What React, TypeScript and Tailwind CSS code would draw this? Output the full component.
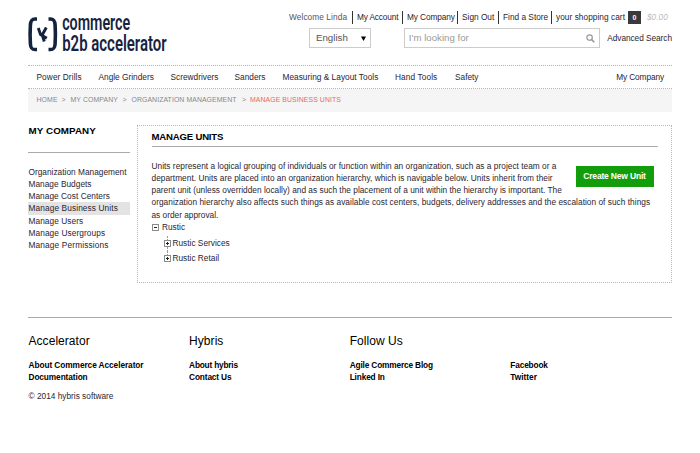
import React from 'react';

const nav: [string, string][] = [
  ['Power Drills', 'w-[62px] tracking-[0.080px]'],
  ['Angle Grinders', 'w-[72px]'],
  ['Screwdrivers', 'w-[64px]'],
  ['Sanders', 'w-[48px]'],
  ['Measuring & Layout Tools', 'w-[112.500px] tracking-[0.020px]'],
  ['Hand Tools', 'w-[60px] tracking-[0.100px]'],
  ['Safety', 'flex-1'],
];

const side: [string, string][] = [
  ['Organization Management', 'tracking-[0.010px]'],
  ['Manage Budgets', 'tracking-[0.020px]'],
  ['Manage Cost Centers', 'tracking-[0.040px]'],
  ['Manage Business Units', 'tracking-[0.110px]'],
  ['Manage Users', 'tracking-[0.060px]'],
  ['Manage Usergroups', 'tracking-[0.090px]'],
  ['Manage Permissions', 'tracking-[0.150px]'],
];

const intro: [string, string][] = [
  ['Units represent a logical grouping of individuals or function within an organization, such as a project team or a', 'tracking-[0.025px]'],
  ['department. Units are placed into an organization hierarchy, which is navigable below. Units inherit from their', 'tracking-[0.025px]'],
  ['parent unit (unless overridden locally) and as such the placement of a unit within the hierarchy is important. The', 'tracking-[0.012px]'],
  ['organization hierarchy also affects such things as available cost centers, budgets, delivery addresses and the escalation of such things', 'tracking-[0.032px]'],
  ['as order approval.', ''],
];

const columns: { title: string; links: [string, string][] }[] = [
  { title: 'Accelerator', links: [['About Commerce Accelerator', 'tracking-[-0.070px]'], ['Documentation', 'tracking-[-0.100px]']] },
  { title: 'Hybris', links: [['About hybris', 'tracking-[-0.200px]'], ['Contact Us', 'tracking-[-0.150px]']] },
  { title: 'Follow Us', links: [['Agile Commerce Blog', 'tracking-[-0.160px]'], ['Linked In', 'tracking-[-0.150px]']] },
  { title: '', links: [['Facebook', 'tracking-[-0.150px]'], ['Twitter', '']] },
];

function Logo() {
  return (
    <svg width="142" height="44" viewBox="0 0 142 44" className="block overflow-visible" fill="#16233f">
      <path d="M9 5H7C3.500 5 2.700 7 2.400 11C2 17 2 24 2.400 30C2.700 34 3.500 35.500 7 35.500H9M20.500 5H22.500C26 5 26.800 7 27.100 11C27.500 17 27.500 24 27.100 30C26.800 34 26 35.500 22.500 35.500H20.500" fill="none" stroke="#16233f" strokeWidth="3.600" />
      <path d="M10.300 14L12.500 20.500L18.800 24.300M18.300 13.500L14.200 21L16.300 27.500" fill="none" stroke="#16233f" strokeWidth="2.900" />
      <text x="34.200" y="16.200" fontSize="22" fontWeight="600" fontFamily="Roboto, 'Liberation Sans', sans-serif" textLength="68" lengthAdjust="spacingAndGlyphs">commerce</text>
      <text x="34.200" y="36.700" fontSize="22" fontWeight="600" fontFamily="Roboto, 'Liberation Sans', sans-serif" textLength="104.500" lengthAdjust="spacingAndGlyphs">b2b accelerator</text>
    </svg>
  );
}

function Toggle({ open = false }: { open?: boolean }) {
  return (
    <svg width="7" height="7" viewBox="0 0 7 7" className="block shrink-0" shapeRendering="crispEdges">
      <rect x="0.5" y="0.5" width="6" height="6" fill="#fff" stroke="#8c8c8c" />
      <path d={open ? 'M2 3.5H5' : 'M2 3.5H5M3.5 2V5'} stroke="#222" fill="none" />
    </svg>
  );
}

export default function App() {
  return (
    <div className="h-[453px] w-[700px] overflow-hidden whitespace-nowrap bg-white px-[28px] font-['Liberation_Sans',Arial,sans-serif] text-[8.300px] leading-[12.150px] text-[#2b2530]">
      <header className="flex h-[65px] justify-between">
        <div className="pt-[14px]">
          <Logo />
        </div>
        <div className="w-[383px] pt-[10px]">
          <div className="flex h-[14px] items-center">
            <span className="w-[63px] tracking-[0.080px] text-[#555]">Welcome Linda</span>
            <span className="h-[13px] w-[50px] border-l border-[#333] pl-[4px] tracking-[-0.150px]">My Account</span>
            <span className="h-[13px] w-[55px] border-l border-[#333] pl-[4px] tracking-[-0.100px]">My Company</span>
            <span className="h-[13px] w-[41px] border-l border-[#333] pl-[4px]">Sign Out</span>
            <span className="h-[13px] w-[53px] border-l border-[#333] pl-[4px]">Find a Store</span>
            <span className="h-[13px] w-[77px] border-l border-[#333] pl-[4px] tracking-[0.040px]">your shopping cart</span>
            <span className="h-[13px] w-[13px] bg-[#3a3a3a] text-center text-[7px] font-bold leading-[13px] text-white">0</span>
            <span className="pl-[6px] italic text-[#bbb]">$0.00</span>
          </div>
          <div className="mt-[4px] flex items-center">
            <div className="ml-[20px] flex h-[20px] w-[62px] items-center justify-between border border-[#ccc] pl-[6px] pr-[4px] text-[9.700px] text-[#555]">
              English
              <svg width="5" height="5" viewBox="0 0 5 5"><path d="M0 0.500H5L2.500 5Z" fill="#000" /></svg>
            </div>
            <div className="ml-[33px] flex h-[20px] w-[197px] items-center justify-between border border-[#ccc] pl-[4px] pr-[4px] text-[9.700px] text-[#999]">
              I'm looking for
              <svg width="9" height="9" viewBox="0 0 9 9" fill="none" stroke="#999"><circle cx="3.600" cy="3.600" r="2.700" strokeWidth="1.200" /><path d="M5.600 5.600L8.300 8.300" strokeWidth="1.600" /></svg>
            </div>
            <span className="pl-[7px] tracking-[-0.050px]">Advanced Search</span>
          </div>
        </div>
      </header>

      <nav className="flex h-[24px] items-center border-y border-dotted border-[#b4b4b4] pl-[8.500px] pr-[8px]">
        {nav.map(([label, style]) => (
          <span key={label} className={style}>{label}</span>
        ))}
        <span className="tracking-[-0.100px]">My Company</span>
      </nav>
      <div className="flex h-[23px] items-center bg-[#f5f5f5] pl-[8.500px] text-[6.900px] text-[#888]">
        <span className="w-[25px] tracking-[0.100px]">HOME</span>
        <span className="w-[9px]">&gt;</span>
        <span className="w-[52px] tracking-[0.100px]">MY COMPANY</span>
        <span className="w-[9px]">&gt;</span>
        <span className="w-[110.500px] tracking-[0.080px]">ORGANIZATION MANAGEMENT</span>
        <span className="w-[8px]">&gt;</span>
        <span className="tracking-[0.080px] text-[#e8686a]">MANAGE BUSINESS UNITS</span>
      </div>

      <div className="flex">
        <aside className="w-[102px] pt-[12px]">
          <h2 className="h-[29px] border-b border-[#aaa] pl-[0.500px] text-[9.800px] font-bold leading-[13px] tracking-[0.080px] text-black">MY COMPANY</h2>
          <ul className="mt-[13px]">
            {side.map(([item, style], i) => (
              <li key={item} className={i === 3 ? 'bg-[#e3e3e3] pl-[0.500px]' : 'pl-[0.500px]'}>
                <span className={style}>{item}</span>
              </li>
            ))}
          </ul>
        </aside>
        <main className="ml-[7px] mt-[13px] h-[158px] w-[535px] border border-dotted border-[#b8b8b8] px-[13.500px] pt-[4px]">
          <h1 className="h-[17px] border-b border-[#aaa] text-[9.600px] font-bold leading-[13px] tracking-[-0.200px] text-black">MANAGE UNITS</h1>
          <div className="mt-[13px] flex h-[61px] justify-between">
            <div className="w-0">
              {intro.map(([line, style]) => (
                <p key={line} className={style}>{line}</p>
              ))}
            </div>
            <button className="mr-[4px] mt-[6px] h-[21px] w-[78px] bg-[#129e0c] text-[8.500px] font-bold tracking-[-0.180px] text-white">Create New Unit</button>
          </div>
          <ul>
            <li className="flex h-[13px] items-center gap-[3.500px]"><Toggle open />Rustic</li>
            <li className="ml-[12px] mt-[2px]">
              <div className="flex h-[15px] items-center gap-[2px]">
                <div className="flex h-[15px] flex-col items-center">
                  <span className="h-[4px] border-l border-dotted border-[#999]" />
                  <Toggle />
                  <span className="h-[4px] border-l border-dotted border-[#999]" />
                </div>
                Rustic Services
              </div>
              <div className="flex h-[15px] items-center gap-[2px]">
                <div className="flex h-[15px] flex-col items-center">
                  <span className="h-[4px] border-l border-dotted border-[#999]" />
                  <Toggle />
                </div>
                Rustic Retail
              </div>
            </li>
          </ul>
        </main>
      </div>

      <footer className="mt-[34px] border-t border-[#aaa] text-black">
        <div className="flex pl-[0.500px] pt-[15px]">
          {columns.map((col) => (
            <section key={col.links[0][0]} className="w-[160.600px] shrink-0">
              <h3 className="h-[26px] text-[12px] leading-[16px] tracking-[0.050px]">{col.title}</h3>
              {col.links.map(([link, style]) => (
                <p key={link} className={'font-bold ' + style}>{link}</p>
              ))}
            </section>
          ))}
        </div>
        <p className="mt-[7px] pl-[0.500px] text-[#2b2530]">© 2014 hybris software</p>
      </footer>
    </div>
  );
}
